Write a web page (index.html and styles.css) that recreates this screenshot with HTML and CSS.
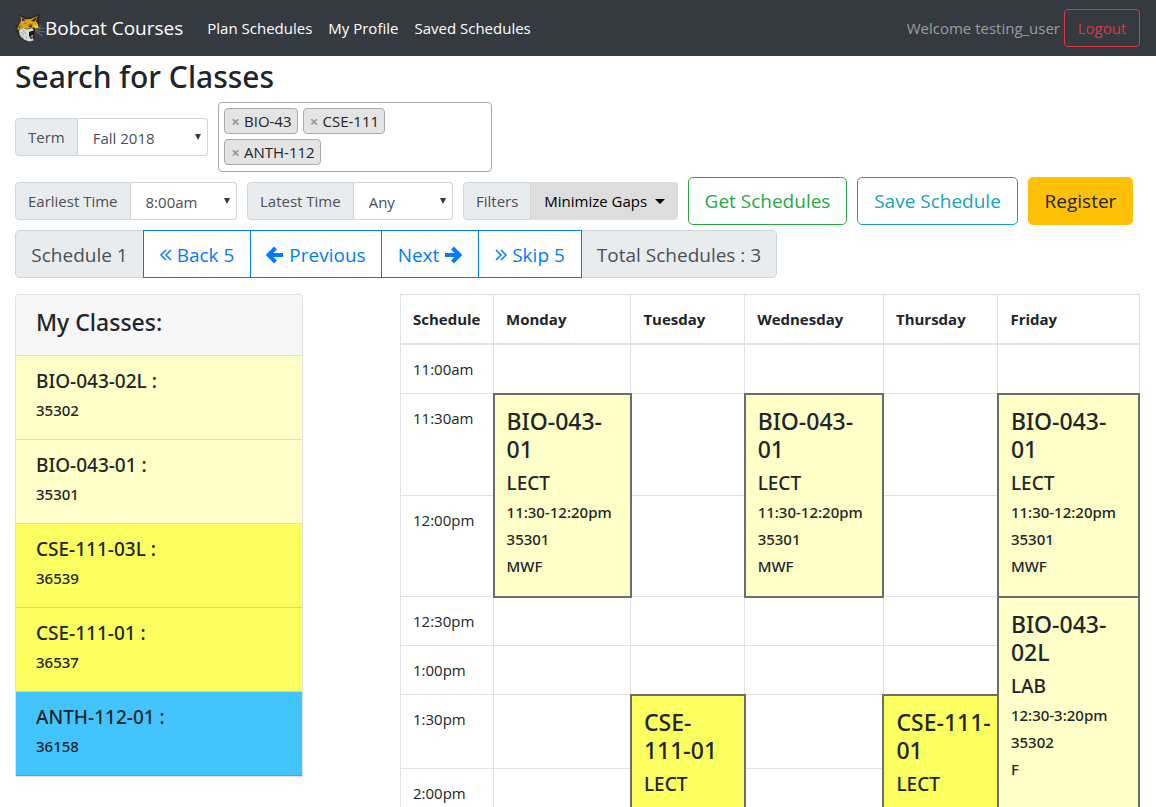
FILE: index.html
```html
<!DOCTYPE html>
<html lang="en">
<head>
<meta charset="utf-8">
<meta name="viewport" content="width=device-width, initial-scale=1">
<title>Bobcat Courses</title>
<link rel="stylesheet" href="styles.css">
</head>
<body>
<nav class="navbar">
  <a class="brand" href="#">
    <svg class="logo" viewBox="0 0 30 30" aria-hidden="true">
      <path d="M5 9 4.300 1 11 4.500 17 4 25 .5 24 9 24.500 14 20 18 19 27 13 29 8 27 4 24 2 19 0 16 2 12Z" fill="#292a24"/>
      <path d="M6 8 5.500 3.500 10 6.500 16 6 22.500 3 21 8 23.500 12 22 15 16 14.500 12 16 8 15 5 18 2 16 4 12Z" fill="#d9a514"/>
      <path d="M7 8 6.800 4.500 10.500 8ZM16 8 22 3.500 20 8.500Z" fill="#3b2f20"/>
      <path d="M3 14 7 12 4 17ZM12 12 18 10.500 16 13ZM9 9 12 10 10 11Z" fill="#8b6914"/>
      <path d="M18 11.500 22.500 12.500 24 14.500 20.500 15.500Z" fill="#f2ca43"/>
      <path d="M4 18 8 15 12 16.500 17 15 19 17.500 15 19 14.500 22 16 26 18 25 18.500 27.500 14 28.500 9 26.500 5 23Z" fill="#d9dbd9"/>
      <path d="M13 13 17.500 12.500 16 14.300ZM14 19 20 17 18.500 20 18.800 24 16 26 14 23Z" fill="#17191a"/>
      <path d="M15.500 23 18 21.500 18 24 16.500 25Z" fill="#c88b54"/>
      <path d="M6 19 9 22M8 17 11 21M5 22 9 25M11 23 12 26" stroke="#8b9092" stroke-width=".8"/>
      <path d="M20 16 29 15M20.500 17.500 30 19M20.500 18.500 28 23M22 15.500 27 12" stroke="#858c92" stroke-width=".7"/>
    </svg><span>Bobcat Courses</span>
  </a>
  <a class="nav-link" href="#">Plan Schedules</a>
  <a class="nav-link" href="#">My Profile</a>
  <a class="nav-link" href="#">Saved Schedules</a>
  <span class="welcome">Welcome testing_user</span>
  <button class="logout" type="button">Logout</button>
</nav>

<main class="page">
  <h2 class="page-title">Search for Classes</h2>

  <div class="toolbar toolbar-search">
    <div class="group group-term">
      <label class="addon" for="term">Term</label>
      <div class="select-box">
        <select id="term"><option>Fall 2018</option></select>
      </div>
    </div>
    <ul class="tags" aria-label="Courses">
      <li class="tag"><button type="button" aria-label="Remove BIO-43">×</button>BIO-43</li>
      <li class="tag"><button type="button" aria-label="Remove CSE-111">×</button>CSE-111</li>
      <li class="tag"><button type="button" aria-label="Remove ANTH-112">×</button>ANTH-112</li>
    </ul>
  </div>

  <div class="toolbar">
    <div class="group group-earliest">
      <label class="addon" for="earliest">Earliest Time</label>
      <div class="select-box">
        <select id="earliest"><option>8:00am</option></select>
      </div>
    </div>
    <div class="group group-latest">
      <label class="addon" for="latest">Latest Time</label>
      <div class="select-box">
        <select id="latest"><option>Any</option></select>
      </div>
    </div>
    <div class="group group-filters">
      <span class="addon" id="filters-label">Filters</span>
      <button class="dropdown" id="filters" type="button" aria-labelledby="filters-label filters">Minimize Gaps<span class="caret"></span></button>
    </div>
    <button class="btn btn-get" type="button">Get Schedules</button>
    <button class="btn btn-save" type="button">Save Schedule</button>
    <button class="btn btn-register" type="button">Register</button>
  </div>

  <div class="toolbar pager">
    <span class="pager-info pager-current">Schedule 1</span>
    <button class="pager-btn pager-back" type="button">
      <svg class="chevrons" viewBox="0 0 12 14" aria-hidden="true"><path d="M6 2 1 7l5 5M11 2 6 7l5 5"/></svg>Back 5</button>
    <button class="pager-btn pager-prev" type="button">
      <svg class="arrow" viewBox="0 0 18 18" aria-hidden="true"><path d="M9.500 2 2.500 9l7 7M3 9h14"/></svg>Previous</button>
    <button class="pager-btn pager-next" type="button">Next
      <svg class="arrow" viewBox="0 0 18 18" aria-hidden="true"><path d="M8.500 2l7 7-7 7M15 9H1"/></svg></button>
    <button class="pager-btn pager-skip" type="button">
      <svg class="chevrons" viewBox="0 0 12 14" aria-hidden="true"><path d="M1 2l5 5-5 5M6 2l5 5-5 5"/></svg>Skip 5</button>
    <span class="pager-info pager-total">Total Schedules : 3</span>
  </div>

  <div class="content">
    <section class="card">
      <h4 class="card-title">My Classes:</h4>
      <ul class="class-list">
        <li class="class-item pale"><h5>BIO-043-02L :</h5><h6>35302</h6></li>
        <li class="class-item pale"><h5>BIO-043-01 :</h5><h6>35301</h6></li>
        <li class="class-item yellow"><h5>CSE-111-03L :</h5><h6>36539</h6></li>
        <li class="class-item yellow"><h5>CSE-111-01 :</h5><h6>36537</h6></li>
        <li class="class-item blue"><h5>ANTH-112-01 :</h5><h6>36158</h6></li>
      </ul>
    </section>

    <table class="schedule">
      <colgroup>
        <col class="col-time"><col class="col-mon"><col class="col-tue"><col class="col-wed"><col class="col-thu"><col class="col-fri">
      </colgroup>
      <thead>
        <tr><th>Schedule</th><th>Monday</th><th>Tuesday</th><th>Wednesday</th><th>Thursday</th><th>Friday</th></tr>
      </thead>
      <tbody>
        <tr class="short"><td>11:00am</td><td></td><td></td><td></td><td></td><td></td></tr>
        <tr class="tall"><td>11:30am</td>
          <td class="event pale" rowspan="2"><h4>BIO-043-<br>01</h4><h5>LECT</h5><h6>11:30-12:20pm</h6><h6>35301</h6><h6>MWF</h6></td>
          <td></td>
          <td class="event pale" rowspan="2"><h4>BIO-043-<br>01</h4><h5>LECT</h5><h6>11:30-12:20pm</h6><h6>35301</h6><h6>MWF</h6></td>
          <td></td>
          <td class="event pale" rowspan="2"><h4>BIO-043-<br>01</h4><h5>LECT</h5><h6>11:30-12:20pm</h6><h6>35301</h6><h6>MWF</h6></td>
        </tr>
        <tr class="tall"><td>12:00pm</td><td></td><td></td></tr>
        <tr class="short"><td>12:30pm</td><td></td><td></td><td></td><td></td>
          <td class="event pale" rowspan="4"><h4>BIO-043-<br>02L</h4><h5>LAB</h5><h6>12:30-3:20pm</h6><h6>35302</h6><h6>F</h6></td>
        </tr>
        <tr class="short"><td>1:00pm</td><td></td><td></td><td></td><td></td></tr>
        <tr class="medium"><td>1:30pm</td><td></td>
          <td class="event yellow" rowspan="2"><h4>CSE-<br>111-01</h4><h5>LECT</h5></td>
          <td></td>
          <td class="event yellow" rowspan="2"><h4>CSE-111-<br>01</h4><h5>LECT</h5></td>
        </tr>
        <tr class="medium"><td>2:00pm</td><td></td><td></td></tr>
      </tbody>
    </table>
  </div>
</main>
</body>
</html>
```
FILE: styles.css
```css
* { box-sizing: border-box; }

body {
  height: 100vh;
  margin: 0;
  overflow: hidden;
  background: #fff;
  color: #212529;
  font: 15px/24px "Open Sans", "Noto Sans", sans-serif;
}

h2, h4, h5, h6, ul { margin: 0; padding: 0; }
h2, h4, h5, h6 { font-family: "Noto Sans", "Open Sans", sans-serif; font-weight: 500; }
ul { list-style: none; }
button, select { font: inherit; }
a { color: #fff; text-decoration: none; }

.navbar {
  display: flex;
  align-items: center;
  gap: 16px;
  height: 56px;
  padding: 0 16px 0 15px;
  background: #343a40;
}
.brand { display: flex; align-items: center; margin-right: 8px; font-size: 19px; }
.logo { width: 30px; height: 30px; fill: none; }
.welcome { margin-left: auto; color: #9a9da0; }
.logout {
  width: 76px;
  height: 38px;
  margin-left: -12px;
  padding: 0;
  border: 1px solid #dc3545;
  border-radius: 4px;
  background: transparent;
  color: #dc3545;
}

.page { padding: 2px 16px 0 15px; }
.page-title { font-size: 30px; line-height: 38px; }

.toolbar { display: flex; align-items: center; gap: 10px; margin-top: 5px; }
.toolbar-search { margin-top: 6px; }

.group { display: flex; height: 38px; }
.group-term { width: 193px; }
.group-earliest { width: 222px; }
.group-latest { width: 206px; }
.group-filters { width: 215px; }
.addon {
  flex: none;
  padding: 6px 12px;
  border: 1px solid #ced4da;
  border-radius: 4px 0 0 4px;
  background: #e9ecef;
  color: #495057;
  white-space: nowrap;
}
.select-box { position: relative; flex: 1; }
.select-box select {
  width: 100%;
  height: 38px;
  padding: 2px 15px 0;
  border: 1px solid #ced4da;
  border-left: 0;
  border-radius: 0 4px 4px 0;
  background: #fff;
  color: #495057;
  appearance: none;
}
.select-box::after {
  content: "";
  position: absolute;
  top: 16px;
  right: 7px;
  border: 3px solid transparent;
  border-top: 6px solid #343a40;
  border-bottom: 0;
  pointer-events: none;
}
.dropdown {
  flex: 1;
  padding: 0;
  border: 0;
  border-radius: 0 4px 4px 0;
  background: #ddd;
  color: #000;
  white-space: nowrap;
}
.caret {
  display: inline-block;
  margin-left: 8px;
  border: 5px solid transparent;
  border-top-color: #000;
  border-bottom: 0;
  vertical-align: 3px;
}

.tags {
  display: flex;
  flex-wrap: wrap;
  align-content: flex-start;
  gap: 5px;
  width: 274px;
  height: 70px;
  padding: 5px 24px 5px 5px;
  border: 1px solid #aaa;
  border-radius: 4px;
}
.tag {
  display: flex;
  height: 26px;
  padding: 0 5px;
  border: 1px solid #aaa;
  border-radius: 4px;
  background: #e4e4e4;
}
.tag button {
  width: 11px;
  margin-right: 3px;
  padding: 0;
  border: 0;
  background: none;
  color: #999;
  font-weight: 700;
}

.btn {
  height: 48px;
  padding: 0;
  border: 1px solid;
  border-radius: 5px;
  background: #fff;
  font-size: 19px;
}
.btn-get { width: 159px; color: #28a745; }
.btn-save { width: 161px; color: #17a2b8; }
.btn-register { width: 105px; border-color: #ffc107; background: #ffc107; color: #212529; }

.pager { gap: 0; height: 48px; font-size: 19px; }
.pager-info {
  height: 48px;
  border: 1px solid #ced4da;
  background: #e9ecef;
  color: #495057;
  line-height: 48px;
  text-align: center;
}
.pager-current { width: 129px; border-radius: 5px 0 0 5px; }
.pager-total { width: 195px; border-left: 0; border-radius: 0 5px 5px 0; }
.pager-btn {
  display: flex;
  align-items: center;
  justify-content: center;
  gap: 5px;
  height: 48px;
  margin-left: -1px;
  padding: 2px 0 0;
  border: 1px solid #007bff;
  background: #fff;
  color: #007bff;
}
.pager-back { width: 108px; }
.pager-prev { width: 132px; }
.pager-next { width: 98px; }
.pager-skip { width: 104px; }
.chevrons { width: 12px; height: 14px; fill: none; stroke: currentColor; stroke-width: 1.5; }
.arrow { width: 18px; height: 18px; fill: none; stroke: currentColor; stroke-width: 4; }

.content { display: flex; align-items: flex-start; gap: 97px; margin-top: 16px; }

.card {
  flex: 0 0 288px;
  overflow: hidden;
  border: 1px solid #dfdfdf;
  border-radius: 4px 4px 0 0;
}
.card-title {
  padding: 13px 20px 19px;
  border-bottom: 1px solid #dfdfdf;
  background: #f7f7f7;
  font-size: 23px;
  line-height: 28px;
}
.class-item {
  padding: 13px 20px 19px;
  border-bottom: 1px solid rgba(0, 0, 0, .125);
}
.class-item h5 { margin-bottom: 8px; font-size: 19px; line-height: 24px; }
.class-item h6 { font-size: 15px; line-height: 19px; }

.pale { background: #ffffc8; }
.yellow { background: #fcff60; }
.blue { background: #42c5ff; }

.schedule {
  flex: 1;
  width: 100%;
  min-width: 0;
  border-collapse: collapse;
  table-layout: fixed;
}
.col-time { width: 12.6%; }
.col-mon { width: 18.6%; }
.col-tue { width: 15.4%; }
.col-wed { width: 18.8%; }
.col-thu { width: 15.5%; }
.col-fri { width: 19.1%; }
.schedule th, .schedule td {
  padding: 12px;
  border: 1px solid #dee2e6;
  text-align: left;
  vertical-align: top;
}
.schedule th { height: 49px; border-bottom-width: 2px; font-weight: 700; }
.short { height: 49px; }
.medium { height: 74px; }
.tall { height: 101px; }
.schedule .event { border: 2px solid #6c6c6c; }
.event h4 { margin-bottom: 8px; font-size: 23px; line-height: 28px; white-space: nowrap; }
.event h5 { margin-bottom: 8px; font-size: 19px; line-height: 24px; }
.event h6 { margin-bottom: 8px; font-size: 15px; line-height: 19px; }
```
